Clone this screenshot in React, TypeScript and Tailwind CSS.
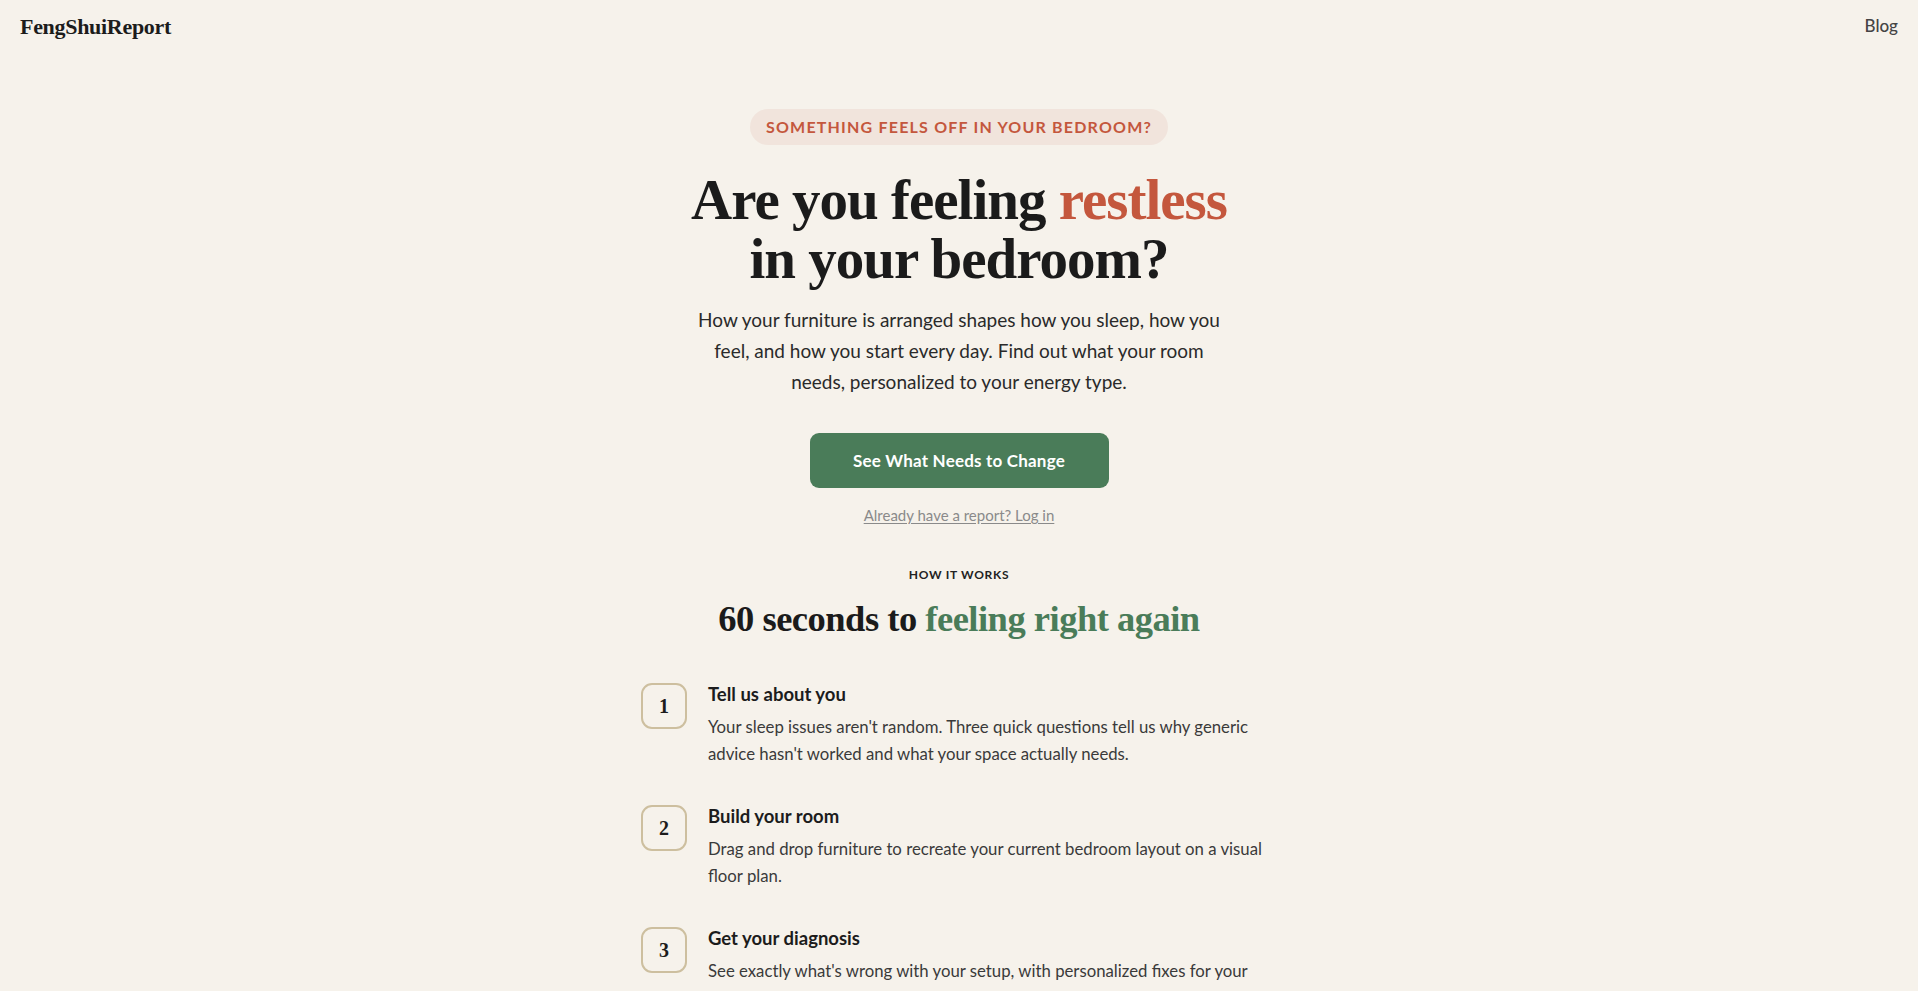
import React from "react";

const serif = "font-['Liberation_Serif',_'DejaVu_Serif',_serif]";
const sans = "font-['Lato',_'Liberation_Sans',_sans-serif]";

type Step = {
  n: number;
  title: string;
  text: string;
};

const steps: Step[] = [
  {
    n: 1,
    title: "Tell us about you",
    text: "Your sleep issues aren't random. Three quick questions tell us why generic advice hasn't worked and what your space actually needs.",
  },
  {
    n: 2,
    title: "Build your room",
    text: "Drag and drop furniture to recreate your current bedroom layout on a visual floor plan.",
  },
  {
    n: 3,
    title: "Get your diagnosis",
    text: "See exactly what's wrong with your setup, with personalized fixes for your energy type and a clear plan to make your bedroom feel right again.",
  },
];

function StepRow({ step }: { step: Step }) {
  return (
    <div className="flex gap-[21px]">
      <div
        className={`mt-0.5 flex h-[46px] w-[46px] shrink-0 items-center justify-center rounded-[11px] border-2 border-[#cdbf9f] text-[20px] font-bold text-[#1c1c1c] ${serif}`}
      >
        {step.n}
      </div>
      <div className="w-[569px]">
        <h3 className="text-[18.5px] font-bold leading-[26px] text-[#1c1c1c]">
          {step.title}
        </h3>
        <p className="mt-[6px] text-[16.75px] leading-[27px] text-[#3a3a3a]">
          {step.text}
        </p>
      </div>
    </div>
  );
}

export default function App() {
  return (
    <div className={`min-h-screen bg-[#f6f2eb] ${sans}`}>
      <header className="flex h-[52px] items-center justify-between px-5">
        <span className={`text-[22px] font-bold tracking-[-0.3px] text-[#1c1c1c] ${serif}`}>
          FengShuiReport
        </span>
        <a href="#" className="text-[17px] font-medium text-[#444]">
          Blog
        </a>
      </header>

      <main className="flex flex-col items-center pt-[57px]">
        <div className="rounded-full bg-[#f1e4dc] px-4 py-[7px] text-[16px] font-bold uppercase leading-[22px] tracking-[1.2px] text-[#c4573d]">
          Something feels off in your bedroom?
        </div>

        <h1
          className={`mt-[25px] text-center text-[57px] font-bold leading-[59px] tracking-[-1px] text-[#1b1b1b] ${serif}`}
        >
          Are you feeling <span className="text-[#c4573d]">restless</span>
          <br />
          in your bedroom?
        </h1>

        <p className="mt-[16px] w-[530px] text-center text-[19px] leading-[31px] text-[#2a2a2a]">
          How your furniture is arranged shapes how you sleep, how you feel, and
          how you start every day. Find out what your room needs, personalized
          to your energy type.
        </p>

        <button className="mt-[36px] h-[55px] w-[299px] rounded-[9px] bg-[#4a7c59] text-[17px] font-bold tracking-[0.2px] text-white">
          See What Needs to Change
        </button>

        <a
          href="#"
          className="mt-[16px] text-[15px] leading-[22px] text-[#8a8a8a] underline underline-offset-2"
        >
          Already have a report? Log in
        </a>

        <div className="mt-[40px] text-[12px] font-bold uppercase leading-[18px] tracking-[0.7px] text-[#222]">
          How it works
        </div>

        <h2
          className={`mt-[12px] text-[36.5px] font-bold leading-[46px] tracking-[-0.5px] text-[#1b1b1b] ${serif}`}
        >
          60 seconds to <span className="text-[#4a7c59]">feeling right again</span>
        </h2>

        <div className="mt-[39px] flex w-[636px] flex-col gap-[36px] pb-16">
          {steps.map((s) => (
            <StepRow key={s.n} step={s} />
          ))}
        </div>
      </main>
    </div>
  );
}
